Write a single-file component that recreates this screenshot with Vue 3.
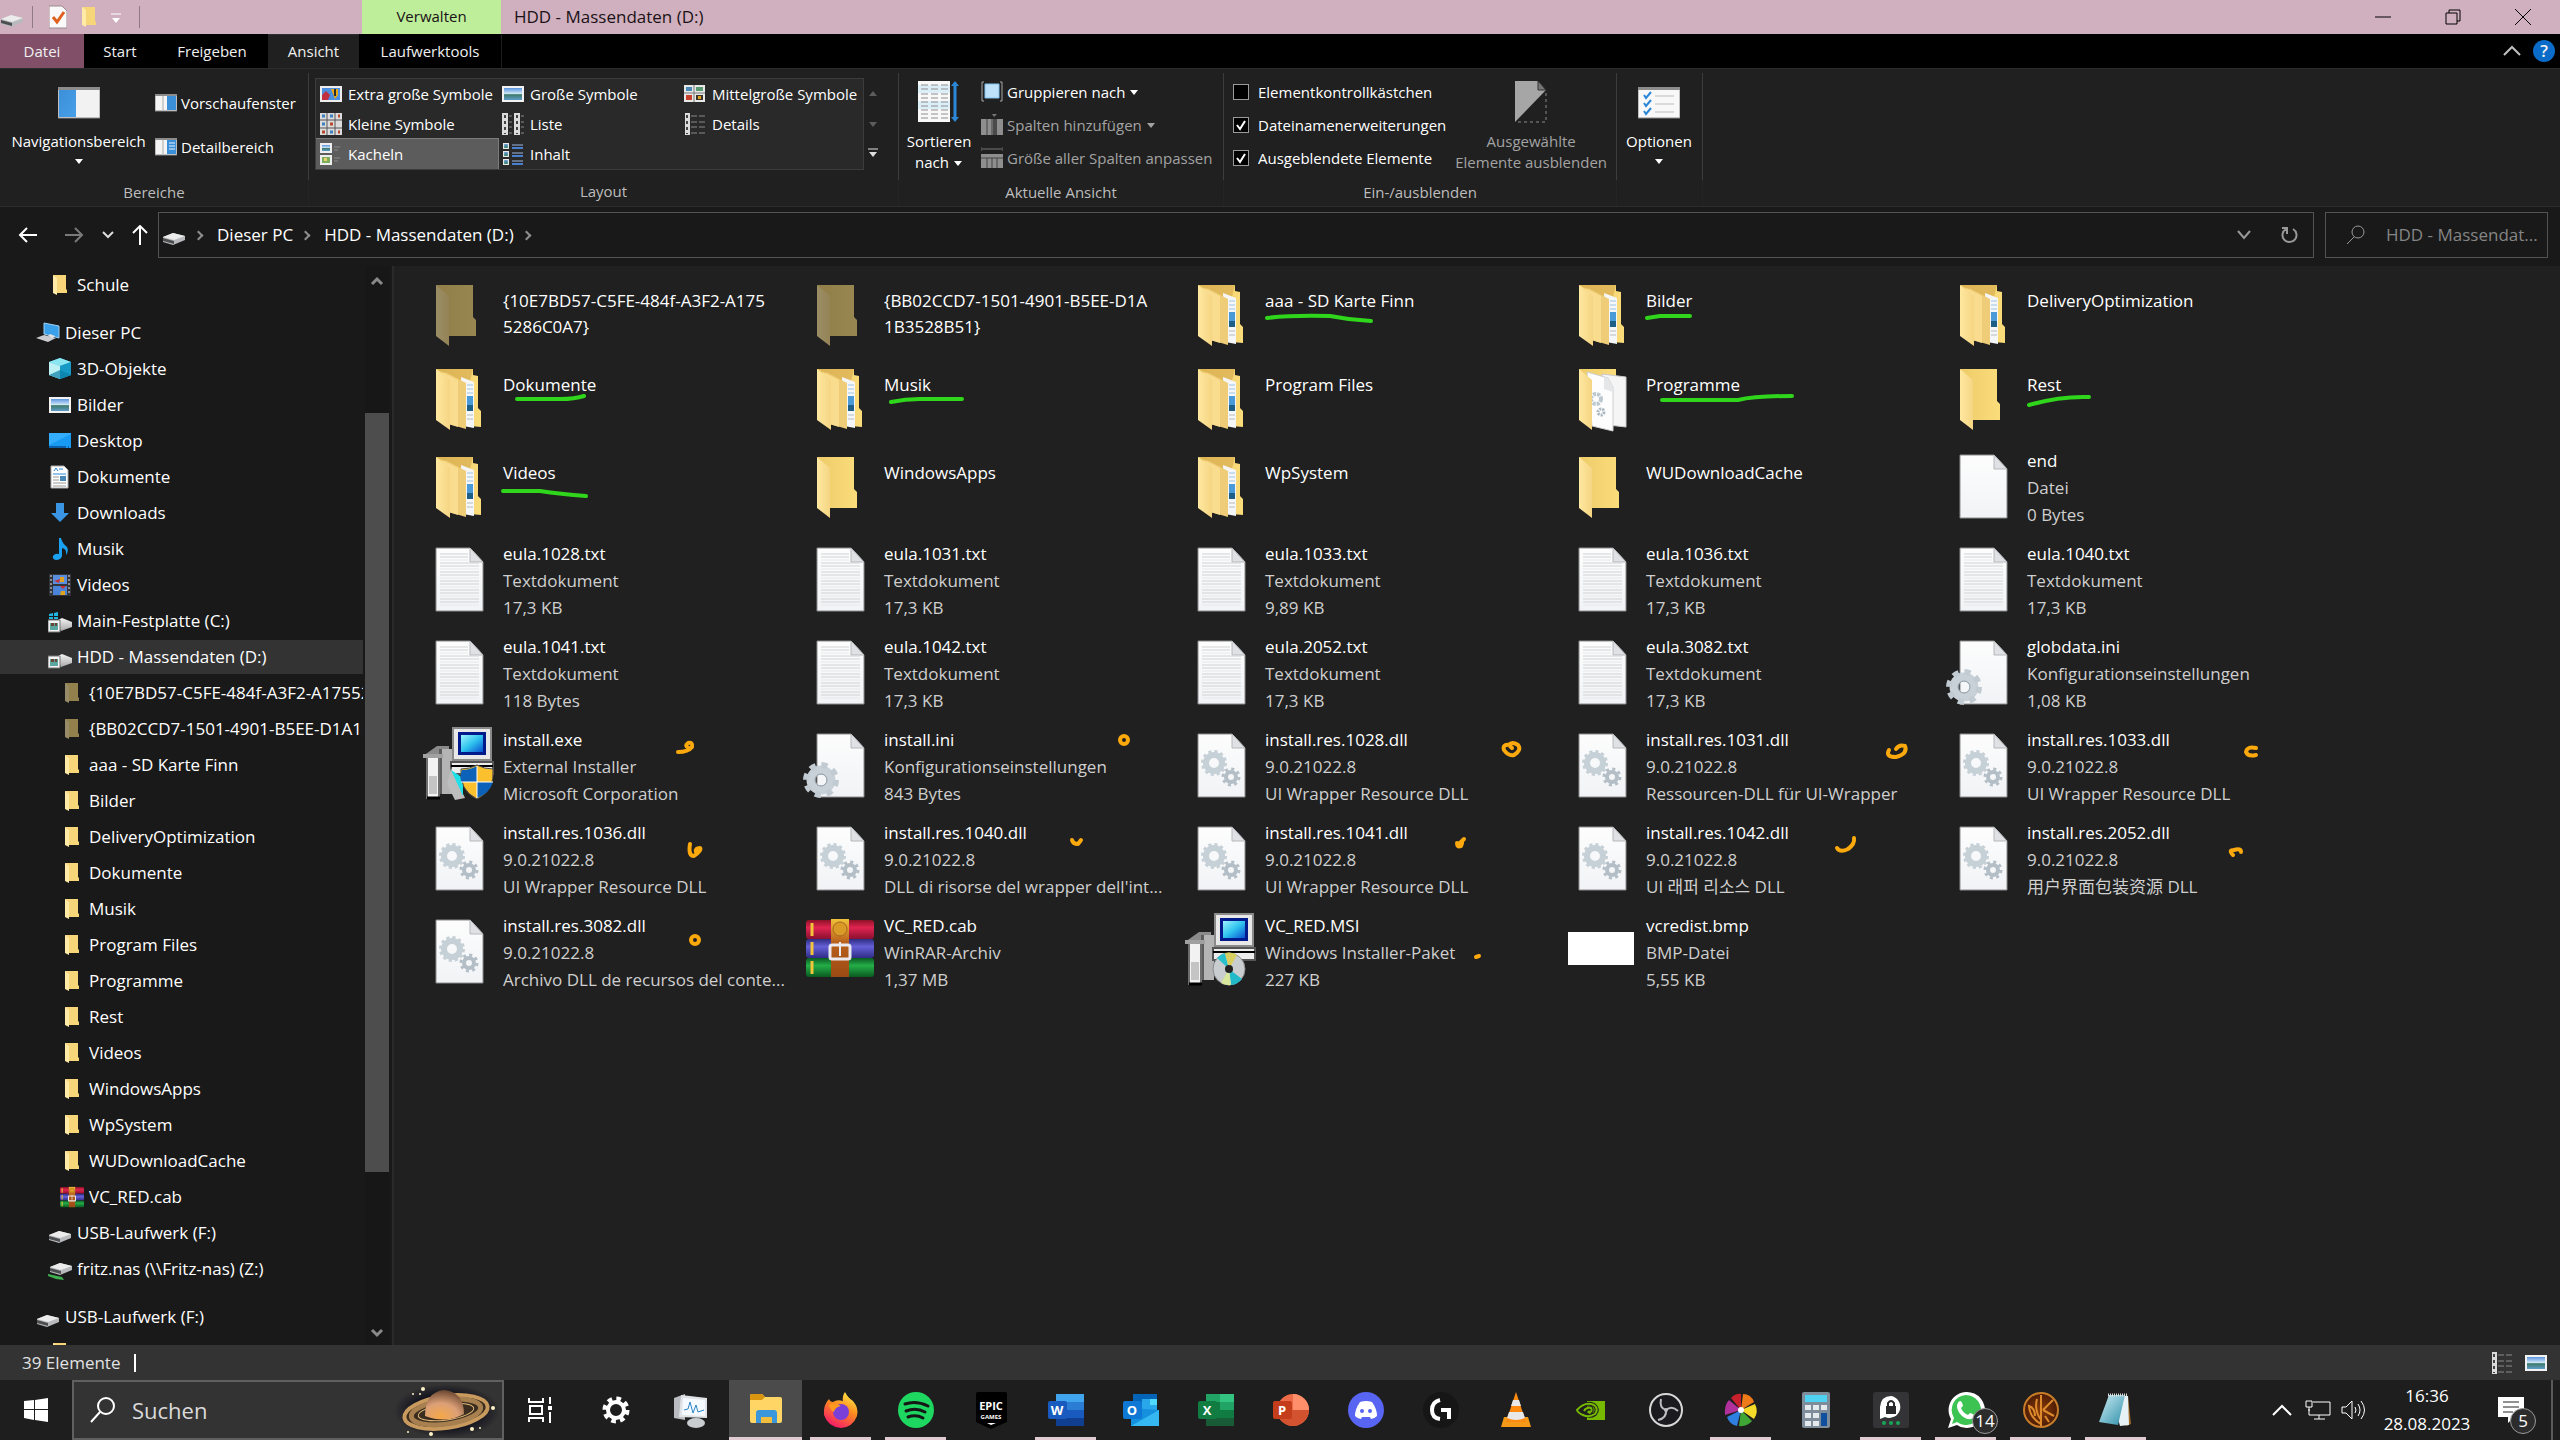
<script setup>
import { ref } from 'vue'

const tabs = [
  { name: 'Datei', cls: 'file' },
  { name: 'Start', cls: 'start' },
  { name: 'Freigeben', cls: 'share' },
  { name: 'Ansicht', cls: 'active' },
  { name: 'Laufwerktools', cls: 'tools' },
]

const layouts = [
  { name: 'Extra große Symbole', icon: 'l-xl' },
  { name: 'Große Symbole', icon: 'l-big' },
  { name: 'Mittelgroße Symbole', icon: 'l-mid' },
  { name: 'Kleine Symbole', icon: 'l-small' },
  { name: 'Liste', icon: 'l-list' },
  { name: 'Details', icon: 'l-details' },
  { name: 'Kacheln', icon: 'l-tiles', selected: true },
  { name: 'Inhalt', icon: 'l-content' },
]

const checks = ref([
  { id: 'chk-box', name: 'Elementkontrollkästchen', on: false },
  { id: 'chk-ext', name: 'Dateinamenerweiterungen', on: true },
  { id: 'chk-hid', name: 'Ausgeblendete Elemente', on: true },
])

const tree = [
  { name: 'Schule', level: 2, icon: 's-folder' },
  { name: 'Dieser PC', level: 1, icon: 's-pc', gap: true },
  { name: '3D-Objekte', level: 2, icon: 's-cube' },
  { name: 'Bilder', level: 2, icon: 's-pictures' },
  { name: 'Desktop', level: 2, icon: 's-desktop' },
  { name: 'Dokumente', level: 2, icon: 's-docs' },
  { name: 'Downloads', level: 2, icon: 's-down' },
  { name: 'Musik', level: 2, icon: 's-music' },
  { name: 'Videos', level: 2, icon: 's-video' },
  { name: 'Main-Festplatte (C:)', level: 2, icon: 's-drive-c' },
  { name: 'HDD - Massendaten (D:)', level: 2, icon: 's-drive-d', selected: true },
  { name: '{10E7BD57-C5FE-484f-A3F2-A1755286C0A7}', level: 3, icon: 's-folder', dim: true },
  { name: '{BB02CCD7-1501-4901-B5EE-D1A1B3528B51}', level: 3, icon: 's-folder', dim: true },
  { name: 'aaa - SD Karte Finn', level: 3, icon: 's-folder' },
  { name: 'Bilder', level: 3, icon: 's-folder' },
  { name: 'DeliveryOptimization', level: 3, icon: 's-folder' },
  { name: 'Dokumente', level: 3, icon: 's-folder' },
  { name: 'Musik', level: 3, icon: 's-folder' },
  { name: 'Program Files', level: 3, icon: 's-folder' },
  { name: 'Programme', level: 3, icon: 's-folder' },
  { name: 'Rest', level: 3, icon: 's-folder' },
  { name: 'Videos', level: 3, icon: 's-folder' },
  { name: 'WindowsApps', level: 3, icon: 's-folder' },
  { name: 'WpSystem', level: 3, icon: 's-folder' },
  { name: 'WUDownloadCache', level: 3, icon: 's-folder' },
  { name: 'VC_RED.cab', level: 3, icon: 's-rar' },
  { name: 'USB-Laufwerk (F:)', level: 2, icon: 's-usb' },
  { name: 'fritz.nas (\\\\Fritz-nas) (Z:)', level: 2, icon: 's-net' },
  { name: 'USB-Laufwerk (F:)', level: 1, icon: 's-usb', gap: true },
  { name: '', level: 2, icon: 's-folder' },
]

const folder = (name, icon = 'f-full', dim = false) => ({ name, icon, dim, folder: true })
const file = (name, icon, type, size) => ({ name, icon, type, size })
const V = '9.0.21022.8'

const files = [
  folder('{10E7BD57-C5FE-484f-A3F2-A1755286C0A7}', 'f-empty', true),
  folder('{BB02CCD7-1501-4901-B5EE-D1A1B3528B51}', 'f-empty', true),
  folder('aaa - SD Karte Finn'),
  folder('Bilder'),
  folder('DeliveryOptimization'),
  folder('Dokumente'),
  folder('Musik'),
  folder('Program Files'),
  folder('Programme', 'f-prog'),
  folder('Rest', 'f-empty'),
  folder('Videos'),
  folder('WindowsApps', 'f-empty'),
  folder('WpSystem'),
  folder('WUDownloadCache', 'f-empty'),
  file('end', 'f-blank', 'Datei', '0 Bytes'),
  file('eula.1028.txt', 'f-txt', 'Textdokument', '17,3 KB'),
  file('eula.1031.txt', 'f-txt', 'Textdokument', '17,3 KB'),
  file('eula.1033.txt', 'f-txt', 'Textdokument', '9,89 KB'),
  file('eula.1036.txt', 'f-txt', 'Textdokument', '17,3 KB'),
  file('eula.1040.txt', 'f-txt', 'Textdokument', '17,3 KB'),
  file('eula.1041.txt', 'f-txt', 'Textdokument', '118 Bytes'),
  file('eula.1042.txt', 'f-txt', 'Textdokument', '17,3 KB'),
  file('eula.2052.txt', 'f-txt', 'Textdokument', '17,3 KB'),
  file('eula.3082.txt', 'f-txt', 'Textdokument', '17,3 KB'),
  file('globdata.ini', 'f-ini', 'Konfigurationseinstellungen', '1,08 KB'),
  file('install.exe', 'f-exe', 'External Installer', 'Microsoft Corporation'),
  file('install.ini', 'f-ini', 'Konfigurationseinstellungen', '843 Bytes'),
  file('install.res.1028.dll', 'f-dll', V, 'UI Wrapper Resource DLL'),
  file('install.res.1031.dll', 'f-dll', V, 'Ressourcen-DLL für UI-Wrapper'),
  file('install.res.1033.dll', 'f-dll', V, 'UI Wrapper Resource DLL'),
  file('install.res.1036.dll', 'f-dll', V, 'UI Wrapper Resource DLL'),
  file('install.res.1040.dll', 'f-dll', V, "DLL di risorse del wrapper dell'int..."),
  file('install.res.1041.dll', 'f-dll', V, 'UI Wrapper Resource DLL'),
  file('install.res.1042.dll', 'f-dll', V, 'UI 래퍼 리소스 DLL'),
  file('install.res.2052.dll', 'f-dll', V, '用户界面包装资源 DLL'),
  file('install.res.3082.dll', 'f-dll', V, 'Archivo DLL de recursos del conte...'),
  file('VC_RED.cab', 'f-rar', 'WinRAR-Archiv', '1,37 MB'),
  file('VC_RED.MSI', 'f-msi', 'Windows Installer-Paket', '227 KB'),
  file('vcredist.bmp', 'f-bmp', 'BMP-Datei', '5,55 KB'),
]

const apps = [
  { icon: 'a-taskview', title: 'Aktive Anwendungen' },
  { icon: 'a-settings', title: 'Einstellungen' },
  { icon: 'a-monitor', title: 'Ressourcenmonitor' },
  { icon: 'a-explorer', title: 'Explorer', current: true },
  { icon: 'a-firefox', title: 'Firefox', open: true },
  { icon: 'a-spotify', title: 'Spotify', open: true },
  { icon: 'a-epic', title: 'Epic Games' },
  { icon: 'a-word', title: 'Word', open: true },
  { icon: 'a-outlook', title: 'Outlook' },
  { icon: 'a-excel', title: 'Excel' },
  { icon: 'a-ppt', title: 'PowerPoint' },
  { icon: 'a-discord', title: 'Discord' },
  { icon: 'a-ghub', title: 'G HUB' },
  { icon: 'a-vlc', title: 'VLC' },
  { icon: 'a-nvidia', title: 'NVIDIA' },
  { icon: 'a-obs', title: 'OBS' },
  { icon: 'a-picasa', title: 'Fotos', open: true },
  { icon: 'a-calc', title: 'Rechner' },
  { icon: 'a-lock', title: 'Passwort', open: true },
  { icon: 'a-whatsapp', title: 'WhatsApp', open: true, badge: '14' },
  { icon: 'a-swtor', title: 'SWTOR', open: true },
  { icon: 'a-notepad', title: 'Editor', open: true },
]
</script>

<template>
  <div class="screen">
    <svg class="sprite" aria-hidden="true">
      <defs>
        <linearGradient id="gFlap" x1="0" x2="1"><stop offset="0" stop-color="#ffe8a0" /><stop offset="1" stop-color="#f5d583" /></linearGradient>
        <linearGradient id="gBack" x1="0" x2="1"><stop offset="0" stop-color="#edcb69" /><stop offset="1" stop-color="#fbdc7b" /></linearGradient>
        <linearGradient id="gPaper" x1="0" y1="0" x2="0" y2="1"><stop offset="0" stop-color="#fdfdfd" /><stop offset="1" stop-color="#f1f3f6" /></linearGradient>
        <linearGradient id="gDrive" x1="0" y1="0" x2="0" y2="1"><stop offset="0" stop-color="#f4f4f4" /><stop offset="1" stop-color="#a9a9a9" /></linearGradient>
        <linearGradient id="gRed" x1="0" y1="0" x2="0" y2="1"><stop offset="0" stop-color="#8e1226" /><stop offset=".4" stop-color="#e02450" /><stop offset="1" stop-color="#8a1030" /></linearGradient>
        <linearGradient id="gBlu" x1="0" y1="0" x2="0" y2="1"><stop offset="0" stop-color="#2d2c80" /><stop offset=".4" stop-color="#6560d8" /><stop offset="1" stop-color="#2f2c86" /></linearGradient>
        <linearGradient id="gGrn" x1="0" y1="0" x2="0" y2="1"><stop offset="0" stop-color="#0b5a22" /><stop offset=".4" stop-color="#24ad48" /><stop offset="1" stop-color="#0a5a20" /></linearGradient>
        <linearGradient id="gBelt" x1="0" y1="0" x2="0" y2="1"><stop offset="0" stop-color="#f0c23a" /><stop offset=".4" stop-color="#b9601c" /><stop offset="1" stop-color="#9c4a14" /></linearGradient>
        <linearGradient id="gScr" x1="0" y1="0" x2="1" y2="1"><stop offset="0" stop-color="#9df3ff" /><stop offset=".5" stop-color="#2fc3ee" /><stop offset="1" stop-color="#0a4fd0" /></linearGradient>
        <linearGradient id="gSky" x1="0" y1="0" x2="0" y2="1"><stop offset="0" stop-color="#5b95e0" /><stop offset=".5" stop-color="#d5ecf8" /><stop offset=".55" stop-color="#3f7a6a" /><stop offset="1" stop-color="#5d9cc8" /></linearGradient>
        <radialGradient id="gPlanet" cx=".4" cy=".9" r=".9"><stop offset="0" stop-color="#f5a848" /><stop offset=".5" stop-color="#dca077" /><stop offset="1" stop-color="#6a4630" /></radialGradient>
        <radialGradient id="gNight"><stop offset=".6" stop-color="#10101c" /><stop offset="1" stop-color="#10101c" stop-opacity="0" /></radialGradient>
        <linearGradient id="gFire" x1=".8" y1="0" x2=".3" y2="1"><stop offset="0" stop-color="#fff04a" /><stop offset=".45" stop-color="#ff8a1e" /><stop offset="1" stop-color="#f5156c" /></linearGradient>
        <radialGradient id="gSw"><stop offset="0" stop-color="#8a3a08" /><stop offset="1" stop-color="#4a1c06" /></radialGradient>
        <linearGradient id="gNote" x1="0" y1="0" x2="1" y2="1"><stop offset="0" stop-color="#cdeef5" /><stop offset="1" stop-color="#2e8ea8" /></linearGradient>
        <linearGradient id="gWin" x1="0" y1="0" x2="1" y2="1"><stop offset="0" stop-color="#3a8fd8" /><stop offset="1" stop-color="#4aa0e8" /></linearGradient>

        <symbol id="page" viewBox="0 0 68 68">
          <path d="M11 2H45L58 16V65H11Z" fill="url(#gPaper)" stroke="#8c8c8c" stroke-width="1" />
          <path d="M45 2V16H58Z" fill="#dfe1e4" stroke="#b5b8bb" stroke-width="1" />
        </symbol>
        <symbol id="f-blank" viewBox="0 0 68 68"><use href="#page" /></symbol>
        <symbol id="f-txt" viewBox="0 0 68 68">
          <use href="#page" />
          <path d="M15 8H43M15 11H43M15 17H54M15 20H54M15 26H54M15 29H54M15 35H54M15 38H54M15 44H54M15 47H54M15 53H54M15 56H54" stroke="#d0d2d4" stroke-width="1" />
          <path d="M15 14H43M15 23H54M15 32H54M15 41H54M15 50H54M15 59H54" stroke="#e6e8ea" stroke-width="1" />
        </symbol>
        <symbol id="f-dll" viewBox="0 0 68 68">
          <use href="#page" />
          <circle cx="27" cy="31" r="8" fill="none" stroke="#c6d0d7" stroke-width="6" />
          <circle cx="27" cy="31" r="11" fill="none" stroke="#c6d0d7" stroke-width="4" stroke-dasharray="3 2.76" />
          <circle cx="44" cy="45" r="5" fill="none" stroke="#b3bec7" stroke-width="4" />
          <circle cx="44" cy="45" r="8" fill="none" stroke="#b3bec7" stroke-width="3" stroke-dasharray="3 3.28" />
        </symbol>
        <symbol id="f-ini" viewBox="0 0 68 68" overflow="visible">
          <use href="#page" />
          <circle cx="15" cy="48" r="10" fill="none" stroke="#c9d1d8" stroke-width="9" />
          <circle cx="15" cy="48" r="15" fill="none" stroke="#c2cbd2" stroke-width="6" stroke-dasharray="6 5.78" />
          <circle cx="15" cy="48" r="6" fill="none" stroke="#8f9aa3" stroke-width="1" />
        </symbol>
        <symbol id="f-bmp" viewBox="0 0 68 68"><path d="M0 14H66V47H0Z" fill="#fff" /></symbol>
        <symbol id="f-empty" viewBox="0 0 68 68">
          <path d="M11 4H48V36L51 39V55H24V40Z" fill="url(#gBack)" />
          <path d="M11 4L24 15V65L11 55Z" fill="url(#gFlap)" />
        </symbol>
        <symbol id="f-full" viewBox="0 0 68 68">
          <path d="M11 4H48V10L53 11V43L56 46V62L45 61L20 50Z" fill="url(#gBack)" />
          <path d="M11 4H48L44 20Z" fill="#cfa347" opacity=".55" />
          <path d="M36 12L49 17V63L38 61Z" fill="#f4f6f8" />
          <path d="M42 20H48M42 24H48M42 28H48" stroke="#9cc4e4" stroke-width="1" />
          <path d="M42 31H48V46H42Z" fill="#4a9ad8" /><path d="M42 40H48V46H42Z" fill="#1e5f88" />
          <path d="M42 50H48M42 54H48" stroke="#b8bcc0" stroke-width="1" />
          <path d="M20 7L41 18V64L24 59Z" fill="#efcd78" />
          <path d="M17 7L33 15V62L20 58Z" fill="#f9dc8d" />
          <path d="M11 4L25 15V65L11 55Z" fill="url(#gFlap)" />
        </symbol>
        <symbol id="f-prog" viewBox="0 0 68 68">
          <path d="M11 4H48V42H20Z" fill="url(#gBack)" />
          <path d="M34 9L58 12V62L40 60Z" fill="#f5f5f5" stroke="#c9c9c9" />
          <path d="M19 7L40 13L45 22V66L24 61Z" fill="#fdfdfd" stroke="#cfcfcf" />
          <path d="M36 12L36 24L45 27V22L40 13Z" fill="#e4e6e8" />
          <circle cx="28" cy="34" r="5" fill="none" stroke="#bcc8d0" stroke-width="4" stroke-dasharray="3 1" />
          <circle cx="33" cy="47" r="3" fill="none" stroke="#a9b6bf" stroke-width="3" stroke-dasharray="2 1" />
          <path d="M11 4L24 15V65L11 55Z" fill="url(#gFlap)" />
        </symbol>
        <symbol id="f-rar" viewBox="0 0 68 68">
          <rect x="0" y="2" width="68" height="19" rx="3" fill="url(#gRed)" />
          <rect x="0" y="21" width="68" height="19" rx="3" fill="url(#gBlu)" />
          <rect x="0" y="40" width="68" height="19" rx="3" fill="url(#gGrn)" />
          <path d="M6 5V18M6 24V37M6 43V56" stroke="#f2c43a" stroke-width="3" />
          <rect x="25" y="1" width="18" height="58" fill="url(#gBelt)" />
          <circle cx="34" cy="11" r="7" fill="#d99a28" stroke="#a8681a" />
          <rect x="24" y="27" width="20" height="14" rx="2" fill="none" stroke="#e9e9ee" stroke-width="3" />
          <path d="M34 24V38" stroke="#e9e9ee" stroke-width="2" />
        </symbol>
        <symbol id="tower" viewBox="0 0 68 68" overflow="visible">
          <path d="M-2 24L12 14H24V24Z" fill="#8a8a8a" />
          <path d="M14 17H27V62H14Z" fill="#b4b4b4" />
          <path d="M14 17H17V62H14Z" fill="#5c5c5c" />
          <path d="M2 25H14V66H2Z" fill="#f2f2f2" stroke="#6c6c6c" stroke-width="2" />
          <path d="M-2 24H18" stroke="#a0a0a0" stroke-width="4" />
          <path d="M4 44H12V62H4Z" fill="#c4c4c4" />
          <path d="M2 66H15" stroke="#000" stroke-width="3" />
          <path d="M26 30H68V42H26Z" fill="#ececec" stroke="#555" stroke-width="2" />
          <path d="M26 34H68" stroke="#000" stroke-width="2" />
          <path d="M28 -4H66V28H28Z" fill="#e8e8e8" stroke="#8a8a8a" stroke-width="2" />
          <path d="M33 0H61V23H33Z" fill="#001a8c" />
          <path d="M36 3H58V20H36Z" fill="url(#gScr)" />
        </symbol>
        <symbol id="f-exe" viewBox="0 0 68 68" overflow="visible">
          <use href="#tower" />
          <path d="M26 36L40 66L30 68L22 52Z" fill="#bdbdbd" /><path d="M26 38L38 46V64Z" fill="#1fe0e6" />
          <path d="M52 33Q59 37 68 37Q70 58 52 67Q34 58 36 37Q45 37 52 33Z" fill="#fbc02d" stroke="#4a4a4a" stroke-width="1" />
          <path d="M52 34V50H36Q35 42 37 38Q45 38 52 34Z" fill="#0b62b8" /><path d="M52 50H68Q65 61 52 66Z" fill="#0b62b8" />
          <path d="M52 34V66M36 50H68" stroke="#fff" stroke-width="1" />
        </symbol>
        <symbol id="f-msi" viewBox="0 0 68 68" overflow="visible">
          <use href="#tower" />
          <circle cx="42" cy="51" r="16" fill="#c9cdd0" stroke="#8a8a8a" />
          <path d="M42 51L30 40A16 16 0 0 1 38 35Z" fill="#28c0cc" /><path d="M42 51L38 35A16 16 0 0 1 50 37Z" fill="#d8cf60" />
          <path d="M42 51L55 61A16 16 0 0 1 44 67Z" fill="#22b9c9" /><path d="M42 51L44 67A16 16 0 0 1 34 65Z" fill="#d9e79c" />
          <circle cx="42" cy="51" r="4" fill="#222" />
        </symbol>

        <symbol id="s-folder" viewBox="0 0 24 24">
          <path d="M5 2H18V16L19 17V20H9Z" fill="#f6d678" /><path d="M5 2L9 5V22L5 20Z" fill="#ffeaa8" />
        </symbol>
        <symbol id="s-pc" viewBox="0 0 24 24">
          <path d="M8 2L23 5V17L8 13Z" fill="#3aa0ea" stroke="#9fd0f2" stroke-width="1" />
          <path d="M0 17L8 14L20 17L12 21Z" fill="#c9cdd2" /><path d="M14 13L19 15L17 17L12 15Z" fill="#e4e4e4" />
        </symbol>
        <symbol id="s-cube" viewBox="0 0 24 24">
          <path d="M12 1L23 5V18L12 22L1 18V5Z" fill="#29b7d3" /><path d="M12 1L23 5L12 9L1 5Z" fill="#8be6f2" />
          <path d="M1 5L12 9V22L1 18Z" fill="#bdf1f6" /><path d="M12 9L23 5V18L12 22Z" fill="#1699c4" /><path d="M1 18L12 13L23 18L12 22Z" fill="#0a7fa6" opacity=".7" />
        </symbol>
        <symbol id="s-pictures" viewBox="0 0 24 24"><path d="M1 4H23V20H1Z" fill="#f2f2f2" /><path d="M3 6H21V18H3Z" fill="url(#gSky)" /></symbol>
        <symbol id="s-desktop" viewBox="0 0 24 24"><path d="M1 4H23V19H1Z" fill="#189af2" /><path d="M1 16L23 5V4H1Z" fill="#35adff" /><path d="M1 18H23" stroke="#0a5fa8" stroke-width="2" stroke-dasharray="17 2 1 2" /></symbol>
        <symbol id="s-docs" viewBox="0 0 24 24">
          <path d="M3 1H16L20 5V23H3Z" fill="#fff" stroke="#aaa" stroke-width="1" />
          <path d="M6 6L8 3L10 6M11 4H15M5 9H18" stroke="#2b88d8" stroke-width="1" fill="none" />
          <path d="M5 12H11M5 15H11M5 18H18M5 21H18" stroke="#9a9a9a" stroke-width="1" /><path d="M12 11H18V16H12Z" fill="#4a88b8" />
        </symbol>
        <symbol id="s-down" viewBox="0 0 24 24"><path d="M8 2H16V12H21L12 21L3 12H8Z" fill="#3a96e4" /></symbol>
        <symbol id="s-music" viewBox="0 0 24 24"><path d="M11 1H13Q14 6 19 10Q21 14 18 18Q19 12 14 11V19Q13 23 8 23Q4 22 5 19Q7 16 11 17Z" fill="#1ba1f2" /></symbol>
        <symbol id="s-video" viewBox="0 0 24 24">
          <path d="M1 1H23V23H1Z" fill="#33343a" /><path d="M3 2V22M21 2V22" stroke="#8a8a90" stroke-width="2" stroke-dasharray="2 2" />
          <path d="M5 2H19V11H5Z" fill="#5a8fe0" /><path d="M5 13H19V22H5Z" fill="#4a84d8" /><path d="M12 4H16V9H12ZM13 18H17V22H12Z" fill="#e0a020" /><path d="M6 8L12 6L11 10ZM12 13H18L15 16Z" fill="#c8303a" />
        </symbol>
        <symbol id="s-usb" viewBox="0 0 24 24">
          <path d="M1 14L11 10L23 13V17L11 22L1 19Z" fill="#b8babd" /><path d="M1 14L11 10L23 13L12 17Z" fill="#ececec" />
          <path d="M1 15L12 18V21L1 18Z" fill="#4c4e50" />
        </symbol>
        <symbol id="s-drive-d" viewBox="0 0 24 24" overflow="visible">
          <path d="M8 12L14 9L24 13V18L13 22Z" fill="url(#gDrive)" /><path d="M0 11H12V23H0Z" fill="#f4f4f4" stroke="#777" stroke-width="1" />
          <path d="M2 14H10V21H2Z" fill="#5ba7a0" /><path d="M3 14H6V17H3ZM7 14H9V17H7Z" fill="#6a4436" />
        </symbol>
        <symbol id="s-drive-c" viewBox="0 0 24 24" overflow="visible">
          <use href="#s-drive-d" /><path d="M1 5L5 4V7H1ZM6 4L10 3V7H6ZM1 8H5V10H1ZM6 8H10V10H6Z" fill="#1fb5de" />
        </symbol>
        <symbol id="s-net" viewBox="0 0 24 24" overflow="visible"><path d="M0 17L14 20L16 23L8 22L0 19Z" fill="#3fae4f" /><g transform="translate(1 -4)"><use href="#s-usb" /></g></symbol>
        <symbol id="s-rar" viewBox="0 0 68 60"><use href="#f-rar" width="68" height="68" /></symbol>

        <symbol id="pic" viewBox="0 0 10 10"><path d="M0 0H10V10H0Z" fill="#e8e8e8" /><path d="M2 2H8V8H2Z" fill="#4a88b8" /><path d="M2 6H8V8H2Z" fill="#3f8a5a" /></symbol>
        <symbol id="l-xl" viewBox="0 0 22 22"><path d="M0 3H22V19H0Z" fill="#eee" /><path d="M2 5H20V17H2Z" fill="#4a8fe0" /><path d="M2 12L6 8L10 12L8 17H2Z" fill="#c03040" /><path d="M11 6H18V12L15 16Z" fill="#e8a818" /><path d="M14 6H16V13H14Z" fill="#2c2c2c" /></symbol>
        <symbol id="l-big" viewBox="0 0 22 22"><path d="M0 3H22V19H0Z" fill="#f2f2f2" /><path d="M2 5H20V17H2Z" fill="url(#gSky)" /></symbol>
        <symbol id="l-mid" viewBox="0 0 22 22"><path d="M0 2H21V19H0Z" fill="#e8e8e8" /><path d="M10 2V19M0 10H21" stroke="#777" stroke-width="1" /><path d="M2 4H8V8H2Z" fill="#4a88b8" /><path d="M12 4H19V8H12Z" fill="#5a9a70" /><path d="M2 12H8V17H2Z" fill="#c8402a" /><path d="M12 12H19V17H12Z" fill="#3a342a" /><path d="M14 13H17V16H14Z" fill="#e0a020" /></symbol>
        <symbol id="l-small" viewBox="0 0 22 22"><path d="M0 0H22V22H0Z" fill="#dcdcdc" /><path d="M7 0V22M15 0V22M0 7H22M0 15H22" stroke="#555" stroke-width="1" /><path d="M2 3H5M10 3H13M2 11H5M10 19H13" stroke="#3f7fc0" stroke-width="3" /><path d="M18 3H20M10 11H13M2 19H5M18 19H20" stroke="#b8482a" stroke-width="3" /></symbol>
        <symbol id="l-details" viewBox="0 0 22 22"><path d="M1 0H6V22H1Z" fill="#dcdcdc" /><path d="M3 2V21" stroke="#444" stroke-width="2" stroke-dasharray="3 3" /><path d="M7 3H21M7 9H21M7 14H21M7 20H21" stroke="#8a8a8a" stroke-width="1" stroke-dasharray="6 2" /></symbol>
        <symbol id="l-list" viewBox="0 0 22 22"><path d="M0 0H6V22H0ZM12 0H18V22H12Z" fill="#dcdcdc" /><path d="M3 2V21M15 2V21" stroke="#444" stroke-width="2" stroke-dasharray="3 3" /><path d="M7 3H10M7 9H10M7 14H10M7 20H10M19 3H22M19 9H22M19 14H22M19 20H22" stroke="#8a8a8a" stroke-width="1" /></symbol>
        <symbol id="l-tiles" viewBox="0 0 22 22"><path d="M0 0H12V10H0ZM0 12H12V22H0Z" fill="#eee" /><path d="M2 2H10V8H2Z" fill="url(#gSky)" /><path d="M2 14H10V20H2Z" fill="#7fae5a" /><path d="M4 15H7V18H4Z" fill="#e8d070" /><path d="M14 4H20M14 7H18M14 15H20M14 18H18" stroke="#888" stroke-width="1" /></symbol>
        <symbol id="l-content" viewBox="0 0 22 22"><use href="#pic" x="0" y="0" width="8" height="6" /><use href="#pic" x="0" y="8" width="8" height="6" /><use href="#pic" x="0" y="16" width="8" height="6" /><path d="M10 2H21M10 10H21M10 18H21" stroke="#9ab8e0" stroke-width="1" /><path d="M10 5H21M10 13H21M10 21H21" stroke="#4a7fd0" stroke-width="2" /></symbol>
        <symbol id="caret" viewBox="0 0 10 10"><path d="M1 3H9L5 8Z" fill="currentColor" /></symbol>

        <symbol id="a-taskview" viewBox="0 0 40 40"><path d="M8 8V12H22V8M8 32V28H22V32M9 16H21V24H9ZM29 7V14M29 22V33" fill="none" stroke="#fff" stroke-width="2" /><path d="M27 16H31V20H27Z" fill="#fff" /></symbol>
        <symbol id="a-settings" viewBox="0 0 40 40"><circle cx="20" cy="20" r="8" fill="none" stroke="#fff" stroke-width="4" /><circle cx="20" cy="20" r="11" fill="none" stroke="#fff" stroke-width="5" stroke-dasharray="4.5 4.14" /></symbol>
        <symbol id="a-monitor" viewBox="0 0 40 40"><path d="M3 8L14 4V30L3 28Z" fill="#b8bcc0" /><path d="M10 5L36 8V28L8 27Z" fill="#dfe3e6" /><path d="M12 8L34 10V26L11 25Z" fill="#f4faff" /><path d="M13 20L17 19L19 12L22 23L25 15L27 22L33 20" fill="none" stroke="#2b84c8" stroke-width="1" /><ellipse cx="25" cy="33" rx="9" ry="5" fill="#c9cdd0" /></symbol>
        <symbol id="a-explorer" viewBox="0 0 40 40"><path d="M4 7Q4 5 6 5H16L19 8H34Q36 8 36 10V32Q36 34 34 34H6Q4 34 4 32Z" fill="#ffd665" /><path d="M4 7Q4 5 6 5H16L19 8L16 11H4Z" fill="#d9950f" /><path d="M10 34V24Q10 21 13 21H28Q31 21 31 24V34H26V28H15V34Z" fill="#3a97dc" /><path d="M15 28H26V34H15Z" fill="#f0bd3c" /></symbol>
        <symbol id="a-firefox" viewBox="0 0 40 40"><path d="M24 2Q27 8 32 11Q38 18 36 26Q32 37 20 38Q7 37 3 25Q2 15 8 9Q9 12 12 12Q16 9 22 11Q21 6 24 2Z" fill="url(#gFire)" /><circle cx="20" cy="22" r="8" fill="#7a3fd6" /><path d="M8 15Q14 12 20 16Q14 17 13 22Q9 20 8 15Z" fill="#ff9a1e" /></symbol>
        <symbol id="a-spotify" viewBox="0 0 40 40"><circle cx="20" cy="20" r="18" fill="#1ed760" /><path d="M9 14Q20 10 32 16M10 21Q20 17 29 22M12 27Q20 24 27 28" fill="none" stroke="#161616" stroke-width="3" stroke-linecap="round" /></symbol>
        <symbol id="a-epic" viewBox="0 0 40 40"><path d="M5 4Q5 2 7 2H34Q36 2 36 4V32L20 39L5 32Z" fill="#000" /><text x="20" y="20" text-anchor="middle" font-size="11" font-weight="700" fill="#fff">EPIC</text><text x="20" y="29" text-anchor="middle" font-size="6" font-weight="700" fill="#fff">GAMES</text><path d="M16 33H25L20 35Z" fill="#fff" /></symbol>
        <symbol id="a-word" viewBox="0 0 40 40"><path d="M10 4H38V13H10Z" fill="#41a5ee" /><path d="M10 12H38V20H10Z" fill="#2b7cd3" /><path d="M10 20H38V28H10Z" fill="#185abd" /><path d="M10 28H38V36H10Z" fill="#103f91" /><rect x="2" y="11" width="19" height="18" rx="2" fill="#185abd" /><text x="11" y="25" text-anchor="middle" font-size="13" font-weight="700" fill="#fff">W</text></symbol>
        <symbol id="a-outlook" viewBox="0 0 40 40"><path d="M12 4H36V20H12Z" fill="#0364b8" /><path d="M21 9H36V20H21Z" fill="#28a8ea" /><path d="M29 9H36V15H29Z" fill="#50d9ff" /><path d="M10 18L38 20V36H10Z" fill="#1490df" /><path d="M10 36L38 20V36Z" fill="#35b8f1" /><rect x="2" y="11" width="19" height="18" rx="2" fill="#0f78d4" /><text x="11" y="25" text-anchor="middle" font-size="13" font-weight="700" fill="#fff">O</text></symbol>
        <symbol id="a-excel" viewBox="0 0 40 40"><path d="M10 4H24V13H10Z" fill="#21a366" /><path d="M24 4H38V13H24Z" fill="#33c481" /><path d="M10 12H24V28H10Z" fill="#107c41" /><path d="M24 12H38V20H24Z" fill="#21a366" /><path d="M24 20H38V28H24Z" fill="#107c41" /><path d="M10 28H38V36H10Z" fill="#185c37" /><rect x="2" y="11" width="19" height="18" rx="2" fill="#107c41" /><text x="11" y="25" text-anchor="middle" font-size="13" font-weight="700" fill="#fff">X</text></symbol>
        <symbol id="a-ppt" viewBox="0 0 40 40"><circle cx="22" cy="20" r="16" fill="#ed6c47" /><path d="M22 4A16 16 0 0 1 38 20H22Z" fill="#ff8f6b" /><path d="M6 20H38A16 16 0 0 1 6 20Z" fill="#d35230" /><rect x="2" y="11" width="19" height="18" rx="2" fill="#c43e1c" /><text x="11" y="25" text-anchor="middle" font-size="13" font-weight="700" fill="#fff">P</text></symbol>
        <symbol id="a-discord" viewBox="0 0 40 40"><circle cx="20" cy="20" r="18" fill="#5865f2" /><path d="M14 12Q20 10 26 12Q31 19 31 26Q28 29 25 29L24 27H16L15 29Q12 29 9 26Q9 19 14 12Z" fill="#fff" /><circle cx="16" cy="21" r="2" fill="#5865f2" /><circle cx="24" cy="21" r="2" fill="#5865f2" /></symbol>
        <symbol id="a-ghub" viewBox="0 0 40 40"><circle cx="20" cy="20" r="18" fill="#161616" /><path d="M19 10Q11 12 11 20Q11 28 19 29" fill="none" stroke="#fff" stroke-width="4" /><path d="M20 20H28V29" fill="none" stroke="#fff" stroke-width="4" /></symbol>
        <symbol id="a-vlc" viewBox="0 0 40 40"><path d="M8 27H32L35 37H5Z" fill="#f59a18" /><path d="M20 2L30 32H10Z" fill="#ff8a10" /><path d="M17 10H23L25 16H15ZM13 22H27L29 28Q20 32 11 28Z" fill="#e8e8e8" /></symbol>
        <symbol id="a-nvidia" viewBox="0 0 40 40"><path d="M16 11H34V30H16Z" fill="#76b900" /><path d="M6 20Q14 11 23 15Q28 19 24 24Q18 28 14 23Q14 18 20 18Q22 21 19 22" fill="none" stroke="#1e1e1e" stroke-width="4" /><path d="M6 20Q14 11 23 15Q28 19 24 24Q18 28 12 25Q7 23 6 20ZM13 21Q15 17 20 18Q22 21 18 23" fill="none" stroke="#76b900" stroke-width="2" /></symbol>
        <symbol id="a-obs" viewBox="0 0 40 40"><circle cx="20" cy="20" r="16" fill="#1b1b1f" stroke="#d8d8d8" stroke-width="2" /><path d="M20 20Q13 18 15 9M20 20Q26 15 32 21M20 20Q21 28 12 30" fill="none" stroke="#bdbdc0" stroke-width="2" /><circle cx="20" cy="20" r="2" fill="#bdbdc0" /></symbol>
        <symbol id="a-picasa" viewBox="0 0 40 40"><path d="M20 20L10 8Q15 3 20 4Z" fill="#c8202c" /><path d="M20 20L22 4Q30 4 33 12Z" fill="#ee7a1a" /><path d="M20 20L34 14Q38 22 33 29Z" fill="#f5da2a" /><path d="M20 20L31 31Q26 37 18 36Z" fill="#3fa535" /><path d="M20 20L16 36Q8 34 6 27Z" fill="#2f7fe0" /><path d="M20 20L4 25Q3 15 8 10Z" fill="#b0309c" /><circle cx="20" cy="20" r="3" fill="#fff" /></symbol>
        <symbol id="a-calc" viewBox="0 0 40 40"><rect x="6" y="2" width="28" height="36" rx="2" fill="#7f8c99" /><path d="M9 5H31V12H9Z" fill="#4fd2f2" /><path d="M9 15H15V20H9ZM17 15H23V20H17ZM25 15H31V20H25ZM9 23H15V28H9ZM17 23H23V28H17ZM9 31H15V36H9ZM17 31H23V36H17Z" fill="#e4e9ee" /><path d="M25 23H31V36H25Z" fill="#0f4f9e" /></symbol>
        <symbol id="a-lock" viewBox="0 0 40 40"><rect x="2" y="2" width="36" height="36" rx="3" fill="#343436" /><path d="M20 6A11 11 0 1 1 14 27L9 29V17Q10 6 20 6Z" fill="#fff" /><path d="M15 16H25V24H15Z" fill="#2a2a2c" /><path d="M17 16V13Q20 9 23 13V16" fill="none" stroke="#2a2a2c" stroke-width="2" /><circle cx="13" cy="33" r="2" fill="#18a558" /><circle cx="20" cy="33" r="2" fill="#18a558" /><circle cx="27" cy="33" r="2" fill="#18a558" /></symbol>
        <symbol id="a-whatsapp" viewBox="0 0 40 40"><path d="M20 2A18 18 0 1 1 11 35L2 38L5 29A18 18 0 0 1 20 2Z" fill="#fff" /><path d="M20 5A15 15 0 1 1 11 32L6 34L8 28A15 15 0 0 1 20 5Z" fill="#3cc351" /><path d="M14 11Q16 11 17 16L15 18Q17 23 22 25L24 23Q29 24 28 27Q25 31 19 28Q12 24 11 17Q11 12 14 11Z" fill="#fff" /></symbol>
        <symbol id="a-swtor" viewBox="0 0 40 40"><circle cx="20" cy="20" r="17" fill="url(#gSw)" stroke="#c87c28" stroke-width="2" /><path d="M20 5V36M20 34Q9 28 8 16Q14 18 14 26M20 30Q13 20 16 9M22 20L32 10M22 20L33 26M24 26L28 32" fill="none" stroke="#dc8a2c" stroke-width="2" /></symbol>
        <symbol id="a-notepad" viewBox="0 0 40 40"><path d="M32 6L35 34L30 36Z" fill="#a06a28" /><path d="M15 5L32 6L33 35L24 36Z" fill="#e6f2f5" /><path d="M13 5H29L22 35L3 32Z" fill="url(#gNote)" /><path d="M12 5H31" stroke="#ddd" stroke-width="3" stroke-dasharray="1 1" /></symbol>
      </defs>
    </svg>

    <header class="titlebar">
      <div class="quick">
        <svg class="i24" viewBox="0 0 24 24"><use href="#s-usb" /></svg>
        <span class="vsep"></span>
        <button class="q" aria-label="Eigenschaften"><svg width="18" height="24" viewBox="0 0 18 24"><path d="M0 1H13L18 6V23H0Z" fill="#fafafa" stroke="#9a8a90" /><path d="M4 12L8 17L15 7" fill="none" stroke="#e0601e" stroke-width="3" /></svg></button>
        <button class="q" aria-label="Neuer Ordner"><svg width="24" height="24"><use href="#s-folder" /></svg></button>
        <button class="q" aria-label="Anpassen"><svg width="10" height="18" viewBox="0 0 10 18"><path d="M0 6H10" stroke="#fff" stroke-width="1" /><path d="M1 10H9L5 15Z" fill="#fff" /></svg></button>
        <span class="vsep"></span>
      </div>
      <div class="context">Verwalten</div>
      <h1>HDD - Massendaten (D:)</h1>
      <div class="winbtns">
        <button aria-label="Minimieren"><svg width="16" height="16"><path d="M0 8H16" stroke="#000" stroke-width="1" /></svg></button>
        <button aria-label="Verkleinern"><svg width="16" height="16" fill="none" stroke="#000"><path d="M1 4H12V15H1ZM4 4V1H15V12H12" /></svg></button>
        <button aria-label="Schließen"><svg width="16" height="16" fill="none" stroke="#000"><path d="M0 0L16 16M16 0L0 16" /></svg></button>
      </div>
    </header>

    <nav class="tabs">
      <button v-for="t in tabs" :key="t.name" :class="t.cls">{{ t.name }}</button>
      <div class="tabs-end">
        <button aria-label="Menüband minimieren"><svg width="18" height="12" viewBox="0 0 18 12"><path d="M1 10L9 2L17 10" fill="none" stroke="#c0c0c0" stroke-width="2" /></svg></button>
        <button class="help" aria-label="Hilfe">?</button>
      </div>
    </nav>

    <section class="ribbon">
      <div class="group g-panes">
        <div class="row">
          <button class="big nav">
            <svg width="42" height="32" viewBox="0 0 42 32"><path d="M0 0H42V31H0Z" fill="#f2f2f2" stroke="#8a8a8a" /><path d="M1 3H18V30H1Z" fill="url(#gWin)" /><path d="M0 0H42V3H0Z" fill="#8c8c8c" /></svg>
            <span>Navigationsbereich</span>
            <svg class="caret"><use href="#caret" /></svg>
          </button>
          <div class="col two">
            <button class="line"><svg width="22" height="18" viewBox="0 0 22 18"><path d="M0 0H22V17H0Z" fill="#f4f4f4" stroke="#888" /><path d="M0 0H22V2H0Z" fill="#8c8c8c" /><path d="M12 2H21V16H12Z" fill="#3a8fd8" /><path d="M8 2V16" stroke="#aaa" /></svg>Vorschaufenster</button>
            <button class="line"><svg width="22" height="18" viewBox="0 0 22 18"><path d="M0 0H22V17H0Z" fill="#f4f4f4" stroke="#888" /><path d="M0 0H22V2H0Z" fill="#8c8c8c" /><path d="M12 2H21V16H12Z" fill="#3a8fd8" /><path d="M14 5H20M14 8H20M14 11H20" stroke="#e8f4ff" /><path d="M8 2V16" stroke="#aaa" /></svg>Detailbereich</button>
          </div>
        </div>
        <p class="caption">Bereiche</p>
      </div>

      <div class="group g-layout">
        <div class="row gallery-row">
          <div class="gallery">
            <button v-for="l in layouts" :key="l.name" :class="{ sel: l.selected }"><svg width="22" height="22"><use :href="'#' + l.icon" /></svg>{{ l.name }}</button>
          </div>
          <div class="gallery-nav">
            <button aria-label="Nach oben"><svg width="10" height="10" viewBox="0 0 10 10"><path d="M1 7H9L5 2Z" fill="#5c5c5c" /></svg></button>
            <button aria-label="Nach unten"><svg width="10" height="10" viewBox="0 0 10 10"><path d="M1 3H9L5 8Z" fill="#5c5c5c" /></svg></button>
            <button aria-label="Mehr"><svg width="10" height="12" viewBox="0 0 10 12"><path d="M0 1H10" stroke="#ddd" stroke-width="1" /><path d="M1 4H9L5 9Z" fill="#ddd" /></svg></button>
          </div>
        </div>
        <p class="caption">Layout</p>
      </div>

      <div class="group g-view">
        <div class="row">
          <button class="big sort">
            <svg width="42" height="42" viewBox="0 0 42 42"><path d="M0 0H32V41H0Z" fill="#f8f8f8" /><path d="M0 4H32V12H0ZM0 20H32V28H0Z" fill="#dceef8" /><path d="M3 4H30M3 8H30M3 13H30M3 17H30M3 21H30M3 25H30M3 29H30M3 33H30M3 37H30" stroke="#8f8f8f" stroke-dasharray="7 3" /><path d="M37 3V38" stroke="#2b88d8" stroke-width="3" /><path d="M33 5L37 0L41 5ZM33 36L37 41L41 36Z" fill="#2b88d8" /></svg>
            <span>Sortieren</span>
            <span>nach<svg class="caret"><use href="#caret" /></svg></span>
          </button>
          <div class="col three">
            <button class="line"><svg width="22" height="22" viewBox="0 0 22 22"><path d="M4 3H18V17H4Z" fill="#bfe2fb" stroke="#7fc0ee" /><path d="M3 1H1V20H3M19 1H21V20H19" fill="none" stroke="#aaa" /></svg>Gruppieren nach<svg class="caret"><use href="#caret" /></svg></button>
            <button class="line off"><svg width="22" height="22" viewBox="0 0 22 22"><path d="M0 5H22V21H0Z" fill="#8e8e8e" /><path d="M6 5V21M11 5V21" stroke="#444" /><path d="M12 5H16V21H12Z" fill="#4a4a4a" /><path d="M11 0H16L13 3Z" fill="#777" /></svg>Spalten hinzufügen<svg class="caret"><use href="#caret" /></svg></button>
            <button class="line off"><svg width="22" height="22" viewBox="0 0 22 22"><path d="M0 7H22V21H0Z" fill="#8e8e8e" /><path d="M0 11H22M6 11V21M11 11V21M16 11V21" stroke="#444" /><path d="M0 0V4M22 0V4M1 2H21" stroke="#777" /></svg>Größe aller Spalten anpassen</button>
          </div>
        </div>
        <p class="caption">Aktuelle Ansicht</p>
      </div>

      <div class="group g-show">
        <div class="row">
          <div class="col three">
            <label v-for="c in checks" :key="c.id" class="line" :for="c.id"><input :id="c.id" v-model="c.on" type="checkbox" />{{ c.name }}</label>
          </div>
          <button class="big hide off">
            <svg width="34" height="42" viewBox="0 0 34 42"><path d="M1 0H24L32 9L1 41Z" fill="#a6a6a6" /><path d="M24 0V9H32Z" fill="#777" stroke="#333" /><path d="M32 12V41H4" fill="none" stroke="#888" stroke-dasharray="3 3" /></svg>
            <span>Ausgewählte</span>
            <span>Elemente ausblenden</span>
          </button>
        </div>
        <p class="caption">Ein-/ausblenden</p>
      </div>

      <div class="group g-opt">
        <div class="row">
          <button class="big">
            <svg width="42" height="32" viewBox="0 0 42 32"><path d="M0 0H42V31H0Z" fill="#f8f8f8" stroke="#8a8a8a" /><path d="M0 0H42V3H0Z" fill="#8c8c8c" /><path d="M6 8L8 11L13 5M6 16L8 19L13 13M6 24L8 27L13 21" fill="none" stroke="#2b88d8" stroke-width="2" /><path d="M17 9H36M17 17H36M17 25H36" stroke="#bbb" /></svg>
            <span>Optionen</span>
            <svg class="caret"><use href="#caret" /></svg>
          </button>
        </div>
      </div>
    </section>

    <section class="address">
      <div class="history">
        <button aria-label="Zurück"><svg width="20" height="20" viewBox="0 0 20 20"><path d="M9 3L2 10L9 17M2 10H19" fill="none" stroke="#fff" stroke-width="2" /></svg></button>
        <button aria-label="Vorwärts"><svg width="20" height="20" viewBox="0 0 20 20"><path d="M11 3L18 10L11 17M18 10H1" fill="none" stroke="#7a7a7a" stroke-width="2" /></svg></button>
        <button class="slim" aria-label="Verlauf"><svg width="12" height="10" viewBox="0 0 12 10"><path d="M1 2L6 7L11 2" fill="none" stroke="#ddd" stroke-width="2" /></svg></button>
        <button class="slim" aria-label="Nach oben"><svg width="18" height="20" viewBox="0 0 18 20"><path d="M2 8L9 1L16 8M9 1V20" fill="none" stroke="#fff" stroke-width="2" /></svg></button>
      </div>
      <div class="path">
        <svg class="i24"><use href="#s-usb" /></svg>
        <span class="sepa"></span>
        <a href="#">Dieser PC</a>
        <span class="sepa"></span>
        <a href="#">HDD - Massendaten (D:)</a>
        <span class="sepa"></span>
        <div class="path-end">
          <button aria-label="Vorherige Orte"><svg width="14" height="10" viewBox="0 0 14 10"><path d="M1 1L7 8L13 1" fill="none" stroke="#999" stroke-width="2" /></svg></button>
          <button aria-label="Aktualisieren"><svg width="18" height="18" viewBox="0 0 18 18"><path d="M12 3A7 7 0 1 1 5 3M1 2H6V8" fill="none" stroke="#999" stroke-width="2" /></svg></button>
        </div>
      </div>
      <div class="find">
        <svg width="20" height="20" viewBox="0 0 20 20"><circle cx="12" cy="7" r="6" fill="none" stroke="#999" /><path d="M8 12L1 19" stroke="#999" /></svg>
        <input type="text" aria-label="Ordner durchsuchen" placeholder="HDD - Massendat..." />
      </div>
    </section>

    <div class="body">
      <aside class="side">
        <nav class="tree">
          <a v-for="(n, i) in tree" :key="i" href="#" :class="['lv' + n.level, { gap: n.gap, sel: n.selected }]">
            <svg class="i24" :class="{ dim: n.dim }"><use :href="'#' + n.icon" /></svg><span>{{ n.name }}</span>
          </a>
        </nav>
        <div class="scroll">
          <svg width="24" height="30" viewBox="0 0 24 30"><path d="M7 18L12 13L17 18" fill="none" stroke="#8a8a8a" stroke-width="3" /></svg>
          <span class="before"></span><span class="thumb"></span><span class="after"></span>
          <svg width="24" height="30" viewBox="0 0 24 30"><path d="M7 15L12 20L17 15" fill="none" stroke="#8a8a8a" stroke-width="3" /></svg>
        </div>
      </aside>

      <main class="files">
        <div class="grid">
          <a v-for="f in files" :key="f.name" href="#" class="tile" :class="{ folder: f.folder }">
            <svg class="big-icon" :class="{ dim: f.dim }"><use :href="'#' + f.icon" /></svg>
            <span class="info">
              <span class="name">{{ f.name }}</span>
              <span v-if="f.type" class="meta">{{ f.type }}</span>
              <span v-if="f.size" class="meta">{{ f.size }}</span>
            </span>
          </a>
        </div>
        <svg class="ink" viewBox="394 266 1968 780" fill="none" stroke-linecap="round" stroke-linejoin="round" aria-hidden="true">
          <g stroke="#2fd61c" stroke-width="4">
            <path d="M1267 318Q1290 315 1330 316Q1350 320 1371 321M1647 318L1660 316H1690M517 399H560Q575 399 584 396M891 402Q905 399 920 399L962 399M1662 400H1738Q1755 396 1792 396M2029 405Q2060 396 2089 397M503 491H540Q560 494 586 496" />
          </g>
          <g stroke="#fba90c" stroke-width="4">
            <path d="M678 752Q688 752 692 747Q693 742 688 743Q684 746 689 748" />
            <ellipse cx="1124" cy="740" rx="4" ry="4" />
            <path d="M1510 745Q1502 744 1504 750Q1508 756 1514 755Q1522 750 1518 745Q1512 741 1509 745L1512 748" />
            <path d="M1889 750Q1885 757 1896 757Q1908 754 1905 746Q1899 744 1896 749" />
            <path d="M2256 748Q2247 746 2246 752Q2248 757 2256 755" />
            <path d="M690 844Q688 856 694 856Q702 850 700 848Q695 848 696 852" />
            <path d="M1072 840Q1073 844 1078 844L1081 840" />
            <path d="M1457 843Q1457 848 1461 846Q1464 840 1459 844L1464 839" />
            <path d="M1837 848Q1840 853 1848 849Q1855 844 1854 838" />
            <path d="M2233 855Q2228 850 2234 850Q2241 848 2241 852" />
            <ellipse cx="695" cy="940" rx="4" ry="4" />
            <path d="M1476 957L1479 956" />
          </g>
        </svg>
      </main>
    </div>

    <footer class="status">
      <span>39 Elemente</span><i class="cursor"></i>
      <div class="views">
        <button aria-label="Details"><svg width="22" height="22"><use href="#l-details" /></svg></button>
        <button aria-label="Große Symbole"><svg width="22" height="22"><use href="#l-big" /></svg></button>
      </div>
    </footer>

    <footer class="taskbar">
      <button class="start-btn" aria-label="Start"><svg width="24" height="24" viewBox="0 0 24 24"><path d="M0 3L10 2V11H0ZM11 2L24 0V11H11ZM0 12H10V22L0 20ZM11 12H24V24L11 22Z" fill="#fff" /></svg></button>
      <div class="search">
        <svg width="26" height="26" viewBox="0 0 26 26"><circle cx="16" cy="9" r="8" fill="none" stroke="#fff" stroke-width="2" /><path d="M10 15L1 25" stroke="#fff" stroke-width="2" /></svg>
        <input type="text" aria-label="Suchen" placeholder="Suchen" />
        <svg width="108" height="56" viewBox="0 0 108 56">
          <ellipse cx="53" cy="29" rx="53" ry="27" fill="url(#gNight)" />
          <g transform="rotate(-8 52 30)"><ellipse cx="52" cy="30" rx="42" ry="16" fill="#3a2c1e" stroke="#c89a5e" stroke-width="4" /><ellipse cx="52" cy="30" rx="35" ry="12" fill="none" stroke="#a88050" stroke-width="5" /><ellipse cx="52" cy="30" rx="28" ry="8" fill="none" stroke="#e0b878" stroke-width="1" /></g>
          <path d="M31 34Q31 10 50 8Q70 10 70 32Q52 42 31 34Z" fill="url(#gPlanet)" />
          <g fill="#fff2c8"><circle cx="29" cy="7" r="2" /><circle cx="26" cy="12" r="1" /><circle cx="19" cy="12" r="1" /><circle cx="99" cy="26" r="2" /><circle cx="78" cy="47" r="2" /><circle cx="86" cy="46" r="1" /><circle cx="37" cy="52" r="2" /><circle cx="14" cy="50" r="1" /></g>
        </svg>
      </div>
      <button v-for="a in apps" :key="a.icon" class="app" :class="{ open: a.open, current: a.current }" :aria-label="a.title">
        <svg width="40" height="40"><use :href="'#' + a.icon" /></svg>
        <span v-if="a.badge" class="badge">{{ a.badge }}</span>
      </button>
      <div class="tray">
        <button aria-label="Ausgeblendete Symbole"><svg width="20" height="12" viewBox="0 0 20 12"><path d="M1 11L10 2L19 11" fill="none" stroke="#fff" stroke-width="2" /></svg></button>
        <button aria-label="Netzwerk"><svg width="26" height="22" viewBox="0 0 26 22"><path d="M8 3H25V16H4V10M14 16V20M9 20H20M1 2H7V8H1ZM4 8V12" fill="none" stroke="#fff" /></svg></button>
        <button aria-label="Lautstärke"><svg width="26" height="22" viewBox="0 0 26 22"><path d="M1 8H5L11 2V20L5 14H1ZM14 8Q16 11 14 14M17 5Q21 11 17 17M20 2Q27 11 20 20" fill="none" stroke="#fff" /></svg></button>
        <div class="clock"><span>16:36</span><span>28.08.2023</span></div>
        <button class="notes" aria-label="Benachrichtigungen"><svg width="26" height="26" viewBox="0 0 26 26"><path d="M0 0H26V20H16L10 26V20H0Z" fill="#fff" /><path d="M5 5H21M5 10H21M5 15H15" stroke="#222" stroke-width="1" /></svg><span class="badge">5</span></button>
        <span class="peek"></span>
      </div>
    </footer>
  </div>
</template>

<style>
html,
body {
  background: #191919;
}
</style>

<style scoped>
.screen {
  height: 100vh;
  display: flex;
  flex-direction: column;
  overflow: hidden;
  background: #191919;
  color: #fff;
  font: 15px/22px "Open Sans", "Noto Sans CJK SC", "Noto Sans CJK KR", sans-serif;
}
.screen * { box-sizing: border-box; }
.sprite { position: absolute; width: 0; height: 0; }
button {
  border: 0;
  padding: 0;
  background: none;
  color: inherit;
  font: inherit;
}
a { color: inherit; text-decoration: none; }
h1, p { margin: 0; font: inherit; }
svg { display: block; flex: none; }
.i24 { width: 24px; height: 24px; }
.caret { width: 10px; height: 10px; }
.dim { opacity: .55; }

.titlebar { display: flex; height: 34px; flex: none; background: #d0b0be; color: #1a1216; }
.quick { display: flex; align-items: center; width: 362px; }
.quick .vsep { width: 1px; height: 22px; margin: 0 16px 0 8px; background: #8e7a83; }
.quick .q { margin-right: 10px; }
.context { width: 139px; background: #beee99; text-align: center; line-height: 32px; }
h1 { padding-left: 13px; font-size: 17px; line-height: 34px; }
.winbtns { display: flex; margin: 0 2px 0 auto; }
.winbtns button { width: 70px; display: grid; place-items: center; }

.tabs { display: flex; height: 34px; flex: none; background: #000; color: #f0f0f0; }
.tabs > button { height: 34px; border-top: 1px solid #000; padding-bottom: 2px; text-align: center; }
.tabs .file { width: 84px; background: #814f68; border-color: #814f68; }
.tabs .start { width: 72px; }
.tabs .share { width: 112px; }
.tabs .active { width: 91px; background: #202020; border-color: #2f2f2f; }
.tabs .tools { width: 143px; border-right: 1px solid #1e1e1e; }
.tabs-end { display: flex; align-items: center; gap: 12px; margin-left: auto; padding-right: 5px; }
.help { width: 22px; height: 22px; border-radius: 50%; background: #0a6cc8; font-size: 17px; font-weight: 600; line-height: 22px; }

.ribbon { display: flex; flex: none; background: #202020; border-top: 1px solid #2d2d2d; border-bottom: 1px solid #2d2d2d; padding-top: 4px; height: 139px; }
.group { display: flex; flex-direction: column; border-right: 1px solid transparent; border-image: linear-gradient(#3c3c3c 80%, #242424 80%) 1; }
.group .row { display: flex; flex: 1; }
.caption { height: 30px; line-height: 30px; text-align: center; color: #bdbdbd; }
.g-panes { width: 309px; }
.g-layout { width: 590px; }
.g-view { width: 325px; }
.g-show { width: 393px; }
.g-opt { width: 86px; }
.big { display: flex; flex-direction: column; align-items: center; height: 104px; line-height: 21px; }
.big > svg:first-child { margin: 14px 0 12px; }
.big.sort > svg:first-child, .big.hide > svg:first-child { margin: 8px 0 8px; }
.big .caret { margin-top: 4px; }
.big span { display: flex; align-items: center; gap: 4px; white-space: nowrap; }
.big span .caret { margin: 0; }
.nav { width: 157px; }
.sort { width: 80px; }
.hide { flex: 1; }
.g-opt .big { width: 84px; }
.col { display: flex; flex-direction: column; }
.line { display: flex; align-items: center; gap: 4px; white-space: nowrap; }
.two { padding-top: 8px; margin-left: -2px; }
.two .line { height: 44px; }
.three { padding-top: 2px; }
.three .line { height: 33px; }
.g-view .three { padding-left: 2px; }
.g-show .three { padding-left: 9px; }
.off { color: #a3a3a3; }
input[type="checkbox"] { appearance: none; width: 16px; height: 16px; margin: 0 5px 0 0; border: 1px solid #9a9a9a; background: #000 center / 12px 12px no-repeat; }
input[type="checkbox"]:checked { background-image: url("data:image/svg+xml,%3Csvg xmlns='http://www.w3.org/2000/svg' viewBox='0 0 12 12'%3E%3Cpath d='M2 6L5 10L10 2' fill='none' stroke='white' stroke-width='2'/%3E%3C/svg%3E"); }
.gallery-row { padding: 6px 0 0 7px; }
.gallery { display: grid; grid-template-columns: repeat(3, 182px); grid-auto-rows: 30px; width: 547px; height: 90px; background: #292929; outline: 1px solid #3c3c3c; }
.gallery button { display: flex; align-items: center; gap: 6px; padding-left: 4px; white-space: nowrap; }
.gallery .sel { background: #5c5c5c; outline: 1px solid #7c7c7c; }
.gallery-nav { display: flex; flex-direction: column; width: 20px; height: 90px; }
.gallery-nav button { flex: 1; display: grid; place-items: center; }

.address { display: flex; flex: none; height: 59px; padding: 5px 12px 8px 0; font-size: 17px; }
.history { display: flex; width: 158px; }
.history button { display: grid; place-items: center; width: 46px; padding-left: 10px; }
.history .slim { width: 32px; padding: 0; }
.path { flex: 1; display: flex; align-items: center; padding-left: 3px; border: 1px solid #535353; }
.sepa { width: 7px; height: 7px; margin: 0 15px 0 9px; border: solid #8e8e8e; border-width: 2px 2px 0 0; transform: rotate(45deg); }
.path-end { display: flex; margin-left: auto; }
.path-end button { display: grid; place-items: center; width: 46px; height: 44px; }
.find { display: flex; align-items: center; width: 223px; margin-left: 11px; padding-left: 20px; border: 1px solid #535353; }
.find input { width: 165px; margin-left: 20px; padding: 0; border: 0; background: none; color: #fff; font: inherit; }
.find input::placeholder { color: #858585; opacity: 1; }

.body { display: flex; flex: 1; min-height: 0; }
.side { display: flex; width: 394px; border-right: 2px solid #2a2a2a; overflow: hidden; }
.tree { flex: 1; min-width: 0; padding-top: 1px; overflow: hidden; font-size: 17px; }
.tree a { display: flex; align-items: center; gap: 5px; height: 36px; margin-right: 2px; overflow: hidden; white-space: nowrap; }
.tree .lv1 { padding-left: 36px; }
.tree .lv2 { padding-left: 48px; }
.tree .lv3 { padding-left: 60px; }
.tree .gap { margin-top: 12px; }
.tree .sel { background: #333; border: solid #191919; border-width: 1px 0; }
.scroll { display: flex; flex-direction: column; width: 24px; margin-right: 3px; background: #171717; }
.scroll .before { flex: 117; }
.scroll .thumb { flex: 759; background: #4d4d4d; }
.scroll .after { flex: 143; }

.files { position: relative; flex: 1; background: #202020; font-size: 17px; overflow: hidden; }
.grid { display: grid; grid-template-columns: repeat(5, 369px); grid-template-rows: repeat(2, 81px); grid-auto-rows: 90px; gap: 3px 12px; padding: 8px 0 0 31px; }
.tile { display: flex; align-items: center; gap: 10px; }
.big-icon { width: 68px; height: 68px; overflow: visible; }
.info { display: flex; flex-direction: column; width: 291px; line-height: 27px; white-space: nowrap; }
.meta { color: #cfcfcf; }
.folder .info { width: 268px; height: 54px; line-height: 26px; white-space: normal; overflow-wrap: anywhere; word-break: break-all; }
.ink { position: absolute; top: 0; left: 0; width: 1968px; height: 780px; pointer-events: none; }

.status { display: flex; align-items: center; flex: none; height: 35px; padding: 0 13px 0 22px; background: #333; color: #e2e2e2; font-size: 17px; }
.cursor { width: 2px; height: 18px; margin-left: 14px; background: #fff; }
.views { display: flex; gap: 12px; margin-left: auto; }

.taskbar { display: flex; flex: none; height: 60px; background: #1e1e1e; }
.start-btn { display: grid; place-items: center; width: 72px; }
.search { display: flex; align-items: center; width: 432px; padding-left: 16px; border: 2px solid #606060; background: #333; }
.search input { flex: 1; min-width: 0; margin-left: 16px; padding: 0; border: 0; background: none; color: #fff; font: 22px/30px "Open Sans", sans-serif; }
.search input::placeholder { color: #dadada; opacity: 1; }
.app { position: relative; display: grid; place-items: center; width: 73px; margin-right: 2px; }
.app.open::after { content: ""; position: absolute; left: 6px; right: 6px; bottom: 0; height: 3px; background: #e0cbd3; }
.app.current { background: #4b4b4b; border-bottom: 3px solid #e0cbd3; }
.badge { position: absolute; right: 4px; bottom: 6px; width: 26px; height: 26px; border: 1px solid #9a9a9a; border-radius: 50%; background: #2c2c2c; font: 17px/23px "Open Sans", sans-serif; text-align: center; }
.tray { display: flex; align-items: center; margin-left: auto; height: 60px; }
.tray button { width: 36px; display: grid; place-items: center; }
.clock { display: flex; flex-direction: column; width: 110px; text-align: center; font-size: 17px; line-height: 28px; }
.tray .notes { position: relative; width: 58px; height: 60px; }
.peek { width: 2px; height: 60px; margin: 0 7px 0 11px; background: #5a5a5a; }
</style>
